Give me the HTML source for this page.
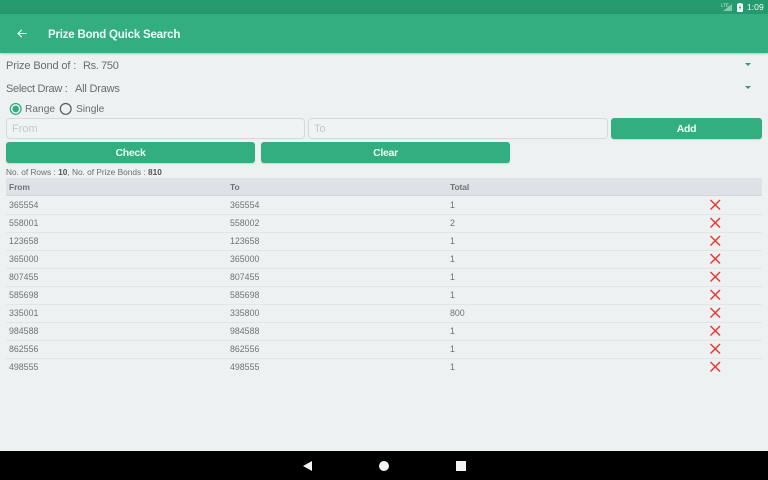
<!DOCTYPE html>
<html><head><meta charset="utf-8">
<style>
html,body{margin:0;padding:0}
body{width:768px;height:480px;position:relative;overflow:hidden;background:#edf1f2;font-family:"Liberation Sans",sans-serif;color:#666}
div{position:absolute;white-space:nowrap}
.btn{background:#32ae80;border-radius:3px;color:#eafff6;font-size:10.5px;font-weight:bold;letter-spacing:-.3px;text-align:center;height:21px;line-height:23px;box-shadow:0 1px 1px rgba(0,0,0,.12)}
.inp{border:1px solid #d5d9da;border-radius:4px;height:19px;top:118px;background:#eff3f4;box-sizing:content-box;color:#c4c8ca;font-size:11px;line-height:21px;padding-left:5px}
.c{font-size:8.8px;line-height:12px;color:#6f7375}
.h{font-size:8.5px;letter-spacing:-.1px;font-weight:bold}
.ln{left:6px;width:756px;height:1px;background:#e2e6e8}
.t{font-size:11px;line-height:14px;color:#686c6e}
</style></head><body>
<div style="left:0;top:0;width:768px;height:14px;background:#259a6f"></div>
<div style="left:0;top:14px;width:768px;height:39px;background:#32ae80;box-shadow:0 1px 2px rgba(0,0,0,.2)"></div>
<svg style="position:absolute;left:16px;top:28px" width="12" height="12" viewBox="0 0 12 12"><path d="M10.5 5.5H2.5M5.8 1.8L2 5.5L5.8 9.2" fill="none" stroke="#e9fff6" stroke-width="1.1"/></svg>
<div style="left:48px;top:28px;font-size:11.5px;letter-spacing:-.2px;line-height:15px;font-weight:bold;color:#eafff6">Prize Bond Quick Search</div>
<svg style="position:absolute;left:720px;top:2px" width="28" height="11" viewBox="0 0 28 11"><text x="1" y="4.500" font-size="4.500" font-family="Liberation Sans" fill="#dcefe7">LTE</text><path d="M3 9L12 2V9Z" fill="#86c9b0"/><rect x="17" y="1.500" width="6" height="8.500" rx="1" fill="#f3fffa"/><rect x="18.800" y="1" width="2.400" height="1" fill="#f3fffa"/><path d="M20.600 3L18.800 6H20L19.400 8.500L21.400 5.200H20.200Z" fill="#259a6f"/></svg>
<div style="left:747px;top:2px;font-size:8.6px;line-height:11px;color:#f0fff9">1:09</div>

<div class="t" style="left:6px;top:59px;letter-spacing:-.13px">Prize Bond of :</div>
<div class="t" style="left:83px;top:59px;letter-spacing:-.35px">Rs. 750</div>
<div class="t" style="left:6px;top:82px;letter-spacing:-.3px">Select Draw :</div>
<div class="t" style="left:75px;top:82px;letter-spacing:-.2px">All Draws</div>
<svg style="position:absolute;left:744px;top:62px" width="8" height="5"><path d="M1 1H7L4 4Z" fill="#2a9d7c"/></svg>
<svg style="position:absolute;left:744px;top:85px" width="8" height="5"><path d="M1 1H7L4 4Z" fill="#2a9d7c"/></svg>

<svg style="position:absolute;left:9px;top:102px" width="14" height="14"><circle cx="6.700" cy="6.900" r="5.400" fill="none" stroke="#32ae80" stroke-width="1.300"/><circle cx="6.700" cy="6.900" r="3.300" fill="#32ae80"/></svg>
<div style="left:25px;top:103px;font-size:10.200px;line-height:14px;color:#6a6e70">Range</div>
<svg style="position:absolute;left:59px;top:102px" width="14" height="14"><circle cx="6.700" cy="6.900" r="5.400" fill="none" stroke="#55595b" stroke-width="1.200"/></svg>
<div style="left:76px;top:103px;font-size:10.200px;line-height:14px;color:#6a6e70">Single</div>

<div class="inp" style="left:6px;width:292px">From</div>
<div class="inp" style="left:308px;width:293px">To</div>
<div class="btn" style="left:611px;top:118px;width:151px">Add</div>
<div class="btn" style="left:6px;top:142px;width:249px">Check</div>
<div class="btn" style="left:261px;top:142px;width:249px">Clear</div>

<div style="left:6px;top:167px;font-size:8.300px;line-height:11px;color:#6a6e70">No. of Rows : <b style="color:#555">10</b>, No. of Prize Bonds : <b style="color:#555">810</b></div>

<div style="left:6px;top:178px;width:756px;height:18px;background:#dee2e7;border-bottom:1px solid #d2d6da;box-sizing:border-box"></div>
<div class="c h" style="left:9px;top:181px">From</div>
<div class="c h" style="left:230px;top:181px">To</div>
<div class="c h" style="left:450px;top:181px">Total</div>

<div class="c" style="left:9px;top:199px">365554</div><div class="c" style="left:230px;top:199px">365554</div><div class="c" style="left:450px;top:199px">1</div><div class="ln" style="top:214px"></div>
<div class="c" style="left:9px;top:217px">558001</div><div class="c" style="left:230px;top:217px">558002</div><div class="c" style="left:450px;top:217px">2</div><div class="ln" style="top:232px"></div>
<div class="c" style="left:9px;top:235px">123658</div><div class="c" style="left:230px;top:235px">123658</div><div class="c" style="left:450px;top:235px">1</div><div class="ln" style="top:250px"></div>
<div class="c" style="left:9px;top:253px">365000</div><div class="c" style="left:230px;top:253px">365000</div><div class="c" style="left:450px;top:253px">1</div><div class="ln" style="top:268px"></div>
<div class="c" style="left:9px;top:271px">807455</div><div class="c" style="left:230px;top:271px">807455</div><div class="c" style="left:450px;top:271px">1</div><div class="ln" style="top:286px"></div>
<div class="c" style="left:9px;top:289px">585698</div><div class="c" style="left:230px;top:289px">585698</div><div class="c" style="left:450px;top:289px">1</div><div class="ln" style="top:304px"></div>
<div class="c" style="left:9px;top:307px">335001</div><div class="c" style="left:230px;top:307px">335800</div><div class="c" style="left:450px;top:307px">800</div><div class="ln" style="top:322px"></div>
<div class="c" style="left:9px;top:325px">984588</div><div class="c" style="left:230px;top:325px">984588</div><div class="c" style="left:450px;top:325px">1</div><div class="ln" style="top:340px"></div>
<div class="c" style="left:9px;top:343px">862556</div><div class="c" style="left:230px;top:343px">862556</div><div class="c" style="left:450px;top:343px">1</div><div class="ln" style="top:358px"></div>
<div class="c" style="left:9px;top:361px">498555</div><div class="c" style="left:230px;top:361px">498555</div><div class="c" style="left:450px;top:361px">1</div>

<svg style="position:absolute;left:709px;top:198px" width="13" height="175" fill="none" stroke="#e53a35" stroke-width="1.500">
<path d="M1.500 2L11 11.500M11 2L1.500 11.500"/>
<path d="M1.500 20L11 29.500M11 20L1.500 29.500"/>
<path d="M1.500 38L11 47.500M11 38L1.500 47.500"/>
<path d="M1.500 56L11 65.500M11 56L1.500 65.500"/>
<path d="M1.500 74L11 83.500M11 74L1.500 83.500"/>
<path d="M1.500 92L11 101.500M11 92L1.500 101.500"/>
<path d="M1.500 110L11 119.500M11 110L1.500 119.500"/>
<path d="M1.500 128L11 137.500M11 128L1.500 137.500"/>
<path d="M1.500 146L11 155.500M11 146L1.500 155.500"/>
<path d="M1.500 164L11 173.500M11 164L1.500 173.500"/>
</svg>

<div style="left:0;top:451px;width:768px;height:29px;background:#000"></div>
<svg style="position:absolute;left:300px;top:459px" width="170" height="14" fill="#f4f4f4"><path d="M3 7L12 2V12Z"/><circle cx="84" cy="7" r="5"/><rect x="156" y="2" width="10" height="10"/></svg>
</body></html>
